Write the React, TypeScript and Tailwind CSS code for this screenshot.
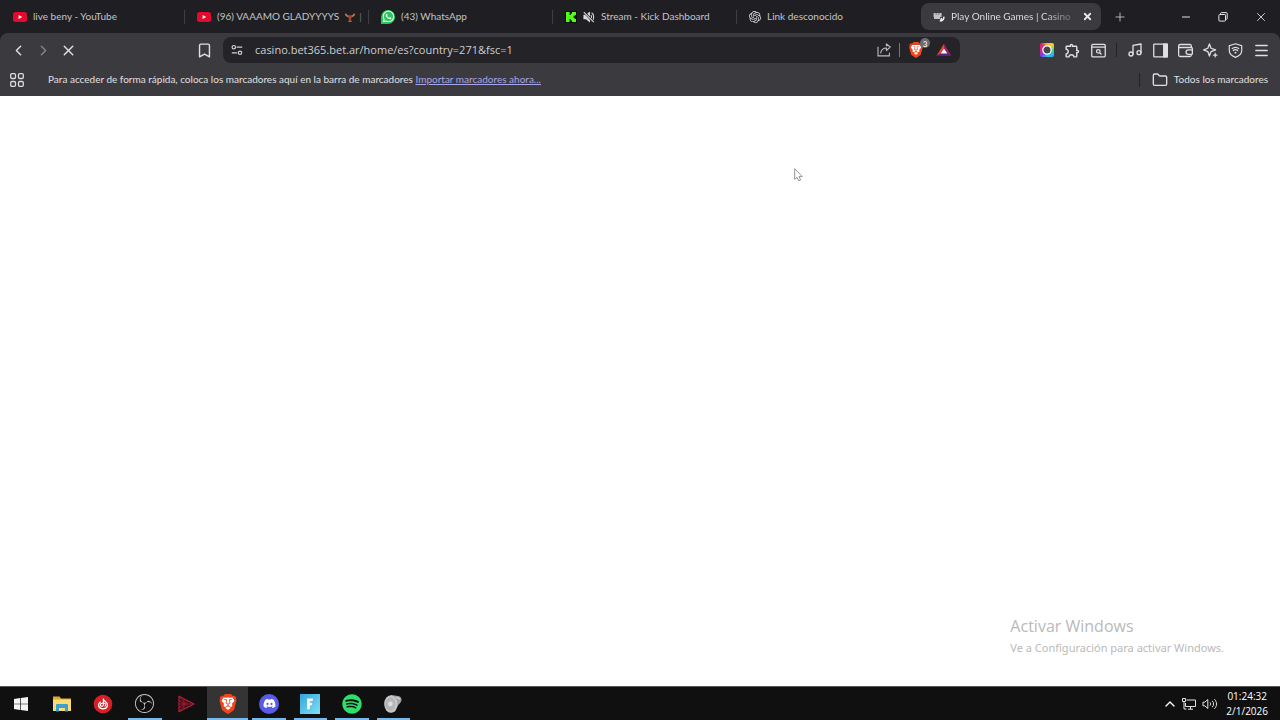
import type { ReactNode } from "react";
import { Bookmark, ChevronLeft, ChevronRight, ChevronUp, Folder, Menu, Minus, Music, Plus, X } from "lucide-react";
import { FaDiscord, FaSpotify, FaWhatsapp } from "react-icons/fa";
import { MdOutlineExtension } from "react-icons/md";
import { SiBrave, SiObsstudio, SiOpenai } from "react-icons/si";

function YoutubeIcon() {
  return (
    <svg viewBox="0 0 14 14" className="size-3.5 shrink-0">
      <rect x="0" y="2" width="14" height="10" rx="2.5" fill="#e5092f" />
      <path d="M5.6 5v4l3.6-2z" fill="#fff" />
    </svg>
  );
}

function WhatsappIcon() {
  return (
    <span className="grid size-3.5 shrink-0 place-items-center rounded-full rounded-bl-sm bg-[#28c65c] text-white">
      <FaWhatsapp size={13} />
    </span>
  );
}

function KickIcon() {
  return (
    <svg viewBox="0 0 12 12" className="size-3 shrink-0">
      <rect width="12" height="12" fill="#06120a" />
      <path
        d="M1 1h3.6v3h1.2V2.500H7V1h4v3H9.700v1.200H8.500v1.600h1.200V8H11v3H7V9.500H5.800V8H4.600v3H1z"
        fill="#53fc18"
      />
    </svg>
  );
}

function MutedIcon() {
  return (
    <svg viewBox="0 0 12 12" className="size-3 shrink-0" fill="none" stroke="#dcdcdf" strokeWidth="1.1">
      <path d="M1 4.4h2L6.4 1.6v8.8L3 7.6H1z" fill="#dcdcdf" />
      <path d="M7.8 4.2c1 .9 1 2.7 0 3.6M8.6 1.8c2.8 1.4 2.8 7 0 8.4" />
      <path d="M1 1l10 10.4" stroke="#1f1e22" strokeWidth="2.4" />
      <path d="M.8 1.2l10 10" />
    </svg>
  );
}

function CasinoIcon() {
  return (
    <svg viewBox="0 0 12 12" className="size-3 shrink-0" fill="none" stroke="#f0f0f0">
      <path d="M.6 3h2.2M3.400 3h2.2M6.200 3h2.4M.6 5h8M1 7h6" strokeWidth="1.7" />
      <path d="M10.800 5.600c.4 2.400-.8 3.700-3.400 4.600M8.600 7l-1.400 3.600" strokeWidth="1.4" />
    </svg>
  );
}

function RamIcon() {
  return (
    <svg viewBox="0 0 10 10" className="size-2.5 shrink-0" fill="none">
      <path d="M.6 1.6C1 4 2.4 4.4 5 4.8 7.6 4.4 9 4 9.4 1.6" stroke="#c98255" strokeWidth="1.6" />
      <path d="M3 3.2h4L5.8 8.4H4.2z" fill="#a3402f" />
      <path d="M3.4 9.2h3.2" stroke="#d6a13a" />
    </svg>
  );
}

function TuneIcon() {
  return (
    <svg viewBox="0 0 12 12" className="size-3" fill="none" stroke="#d2d2d5" strokeWidth="1.2">
      <circle cx="2.8" cy="3.2" r="1.7" />
      <path d="M5.6 3.2h5.6M.8 8.8h5.4" />
      <circle cx="9" cy="8.8" r="1.7" />
    </svg>
  );
}

function ShareIcon() {
  return (
    <svg viewBox="0 0 14 14" className="size-3.5" fill="none" stroke="#bdbdc1" strokeWidth="1.1">
      <path d="M1 3.8v9.1h11.4V9.8" />
      <path d="M3.6 10.4C4.2 6.8 6.4 5 9.4 5V7.6L13.2 4 9.4.8v2.4" strokeLinejoin="round" />
    </svg>
  );
}

function BraveIcon({ className }: { className: string }) {
  return (
    <span className={`relative grid place-items-center text-[#f1431c] ${className}`}>
      <svg viewBox="0 0 24 24" className="absolute inset-0 size-full">
        <path d="M6 4h12l2 4-2 9-6 5-6-5-2-9z" fill="#fff" />
      </svg>
      <SiBrave className="relative size-full" />
    </span>
  );
}

function RewardsIcon() {
  return (
    <svg viewBox="0 0 16 14" className="h-3.5 w-4">
      <path d="M8 .8v5L4.4 10.6.4 13z" fill="#f0442c" />
      <path d="M8 .8v5l3.6 4.8 4 2.4z" fill="#9e1f63" />
      <path d="M.4 13l4.4-2.8h6.4l4.4 2.8z" fill="#5a1f8c" />
      <path d="M8 5.4l3.4 5.2H4.6z" fill="#fff" />
    </svg>
  );
}

function ColorRingIcon() {
  return (
    <span className="grid size-3.5 place-items-center rounded-xs bg-[conic-gradient(#f5b82e,#f5d02e,#3fd37a,#20b9f0,#1fc6e8,#7d3df0,#e0207a,#e0207a,#f5b82e)]">
      <svg viewBox="0 0 10 10" className="size-2.5">
        <circle cx="5" cy="5" r="4.200" fill="#45464c" stroke="#fff" strokeWidth="1.300" />
      </svg>
    </span>
  );
}

function SearchTabIcon() {
  return (
    <svg viewBox="0 0 14 14" className="size-[15px]" fill="none" stroke="currentColor" strokeWidth="1.2">
      <rect x=".7" y="1.2" width="12.6" height="11.8" rx="1" />
      <path d="M.7 3.8h12.6" />
      <circle cx="6.8" cy="7.8" r="1.7" />
      <path d="M8 9l1.8 1.8" />
    </svg>
  );
}

function SidebarIcon() {
  return (
    <svg viewBox="0 0 14 14" className="size-[15px]" fill="none" stroke="currentColor" strokeWidth="1.2">
      <rect x=".7" y="1" width="12.6" height="12" rx=".6" />
      <path d="M10 1h3.300v12H10z" fill="currentColor" />
    </svg>
  );
}

function WalletIcon() {
  return (
    <svg viewBox="0 0 14 14" className="size-[15px]" fill="none" stroke="currentColor" strokeWidth="1.2">
      <path d="M12.4 4.2V2.8c0-.8-.4-1.4-1.4-1.4H2C1.2 1.4.6 2 .6 2.8v8.4c0 .8.6 1.4 1.4 1.4h9c1 0 1.4-.6 1.4-1.4v-.8" />
      <path d="M.8 4.2h11.6c.6 0 1 .4 1 1V10c0 .4-.2.6-.6.6H9.6a2.1 2.1 0 010-4.2h3.8" />
    </svg>
  );
}

function LeoIcon() {
  return (
    <svg viewBox="0 0 14 14" className="size-[15px]" fill="none" stroke="currentColor" strokeWidth="1.2" strokeLinejoin="round">
      <path d="M6 .9l1.5 4L11.8 6.4 7.5 8 6 12.2 4.5 8 .6 6.4l3.900-1.5z" />
      <path d="M11.4 9l.6 1.800 1.600.6-1.600.6-.6 1.600-.6-1.600-1.600-.6 1.600-.6z" fill="currentColor" strokeWidth=".4" />
    </svg>
  );
}

function VpnIcon() {
  return (
    <svg viewBox="0 0 14 14" className="size-[15px]" fill="none" stroke="currentColor" strokeWidth="1.1">
      <path d="M7 .7l5.800 1.900V7c0 3.200-2.600 5.200-5.800 6.400C3.800 12.200 1.200 10.200 1.200 7V2.600z" />
      <path d="M3.600 5.400c2-1.600 4.800-1.600 6.800 0M4.600 7.200c1.500-1.200 3.300-1.200 4.800 0" />
      <circle cx="7" cy="9" r=".9" fill="currentColor" stroke="none" />
    </svg>
  );
}

function GridIcon() {
  return (
    <svg viewBox="0 0 14 14" className="size-3.5" fill="none" stroke="#dcdcdf" strokeWidth="1.300">
      <rect x=".7" y=".7" width="4.800" height="4.800" rx="1.200" />
      <rect x="8.500" y=".7" width="4.800" height="4.800" rx="1.200" />
      <rect x=".7" y="8.500" width="4.800" height="4.800" rx="1.200" />
      <rect x="8.500" y="8.500" width="4.800" height="4.800" rx="1.200" />
    </svg>
  );
}

function RestoreIcon() {
  return (
    <svg viewBox="0 0 10 10" className="size-2.5" fill="none" stroke="currentColor">
      <rect x=".9" y="2.500" width="6.600" height="6.600" rx=".8" />
      <path d="M2.600 2.500V1.400c0-.5.300-.8.800-.8h5c.5 0 .8.300.8.800v5.200c0 .5-.3.800-.8.800h-.9" />
    </svg>
  );
}

function WindowsIcon() {
  return (
    <svg viewBox="0 0 14 14" className="size-3.5" fill="#f4f4f4">
      <path d="M0 2l6-.9v5.600H0zM6.700 1L14 0v6.700H6.700zM0 7.300h6v5.600L0 12zM6.700 7.300H14V14l-7.300-1z" />
    </svg>
  );
}

function ExplorerIcon() {
  return (
    <svg viewBox="0 0 20 16" className="h-4 w-5">
      <path d="M1 .5h6.500l1.500 2h10V15H1z" fill="#e3a92e" />
      <path d="M1 3.500h18V15H1z" fill="#fbdc74" />
      <path d="M4 15.500V9.200C4 8.500 4.500 8 5.200 8h9.600c.7 0 1.200.5 1.200 1.200v6.300h-3V12H7v3.500z" fill="#3d9fd0" />
    </svg>
  );
}

function FlameIcon() {
  return (
    <svg viewBox="0 0 20 20" className="size-5" fill="none" stroke="#fff" strokeWidth="1.200">
      <circle cx="10" cy="10" r="9.300" fill="#d81f26" stroke="none" />
      <path d="M10.400 4.600v6.200c0 2-3 2-3 .1 0-1.200 1.200-1.900 2.800-1.700" />
      <path d="M7.600 7.800C4 10.400 5.400 14.800 10 14.800s6-4.400 2.600-7l-2.200-2" />
      <path d="M10.400 9.200c2.600-.2 3.200 2.200 1.200 3" />
    </svg>
  );
}

function PlayMeshIcon() {
  return (
    <svg viewBox="0 0 18 18" className="size-[18px]" fill="none" stroke="#b51f38" strokeLinejoin="round">
      <path d="M2 1.200L17 9 2 16.800z" fill="#3a0b16" strokeWidth="1.200" />
      <path d="M2 9h14M2 5l5 4-5 4M7 4v10M2 1.200L11 12M2 16.800L11 6" strokeWidth=".7" />
    </svg>
  );
}

function FortniteIcon() {
  return (
    <span className="grid size-5 place-items-center bg-linear-to-br from-[#2fa6dc] to-[#7fe0f5]">
      <svg viewBox="0 0 8 12" className="h-3 w-2">
        <path d="M1.200.5H7L6.600 3H3.800v1.800h2.400l-.2 2.400H3.800V11l-2.600.6z" fill="#fff" />
      </svg>
    </span>
  );
}

function SpeakerIcon() {
  return (
    <svg viewBox="0 0 20 20" className="size-5">
      <path d="M8 1l7 1c2.800.4 4 2.400 3.400 4.800-.5 2-2.400 3-3.200 4.400L12 17.500l-4 1z" fill="#a2a4a7" />
      <ellipse cx="7.800" cy="10" rx="6.600" ry="8.800" fill="#c6c7c9" />
      <ellipse cx="7.400" cy="10" rx="5" ry="6.800" fill="#b3b5b7" />
      <circle cx="7.400" cy="10" r="2.400" fill="#dcddde" />
      <path d="M13 3.500l4 1.400" stroke="#e6e6e6" />
    </svg>
  );
}

function NetworkIcon() {
  return (
    <svg viewBox="0 0 14 12" className="h-3 w-3.5" fill="none" stroke="#e4e4e4">
      <path d="M4.500 2h9v6.500H3.500V5M6 11.200h5M8.500 8.500v2.700" />
      <path d="M.5.500h3v3h-3zM2 3.500V11h2.500" />
    </svg>
  );
}

function VolumeIcon() {
  return (
    <svg viewBox="0 0 16 12" className="h-3 w-4" fill="none" stroke="#e4e4e4">
      <path d="M1 4.200h1.800l3-2.700v9l-3-2.700H1z" />
      <path d="M8 4.400c.8.900.8 2.300 0 3.200M10.200 2.800c1.800 1.800 1.800 4.600 0 6.400M12.400 1.200c2.800 2.700 2.800 6.900 0 9.600" />
    </svg>
  );
}

type Tab = { id: string; title: string; icon: ReactNode; trailing?: ReactNode };

const TABS: Tab[] = [
  { id: "live", title: "live beny - YouTube", icon: <YoutubeIcon /> },
  {
    id: "gladys",
    title: "(96) VAAAMO GLADYYYYS",
    icon: <YoutubeIcon />,
    trailing: (
      <span className="flex items-center gap-1 text-[#77767b]">
        <RamIcon />|
      </span>
    )
  },
  { id: "whatsapp", title: "(43) WhatsApp", icon: <WhatsappIcon /> },
  {
    id: "kick",
    title: "Stream - Kick Dashboard",
    icon: (
      <>
        <KickIcon />
        <MutedIcon />
      </>
    )
  },
  { id: "link", title: "Link desconocido", icon: <SiOpenai size={12} className="shrink-0 text-[#dcdcdf]" /> }
];

const TOOLS = [
  { label: "Música", icon: <Music size={16} strokeWidth={2} /> },
  { label: "Barra lateral", icon: <SidebarIcon /> },
  { label: "Cartera", icon: <WalletIcon /> },
  { label: "Leo", icon: <LeoIcon /> },
  { label: "VPN", icon: <VpnIcon /> },
  { label: "Menú", icon: <Menu size={17} strokeWidth={2} /> }
];

const APPS = [
  { label: "Inicio", icon: <WindowsIcon />, open: false, active: false },
  { label: "Explorador", icon: <ExplorerIcon />, open: false, active: false },
  { label: "BandLab", icon: <FlameIcon />, open: false, active: false },
  { label: "OBS", icon: <SiObsstudio size={19} className="text-[#c9c9c9]" />, open: true, active: false },
  { label: "Reproductor", icon: <PlayMeshIcon />, open: false, active: false },
  { label: "Brave", icon: <BraveIcon className="size-5" />, open: true, active: true },
  {
    label: "Discord",
    icon: (
      <span className="grid size-5 place-items-center rounded-full bg-[#5a5be6] text-white">
        <FaDiscord size={13} />
      </span>
    ),
    open: true,
    active: false
  },
  { label: "Fortnite", icon: <FortniteIcon />, open: true, active: false },
  { label: "Spotify", icon: <FaSpotify size={20} className="text-[#2fdf6b]" />, open: true, active: false },
  { label: "Sonido", icon: <SpeakerIcon />, open: true, active: false }
];

function TabStrip() {
  return (
    <div className="flex h-[33px] items-center pl-px text-[10px] text-[#c4c4c8]">
      <div className="flex h-full min-w-0 flex-1 items-center">
        {TABS.map((tab, i) => (
          <button
            key={tab.id}
            className="flex h-full w-[184px] min-w-0 items-center gap-1.5 overflow-hidden pl-3 whitespace-nowrap"
          >
            {tab.icon}
            <span>{tab.title}</span>
            {tab.trailing}
            {i < TABS.length - 1 && <span className="ml-auto h-3.5 w-px bg-[#3f3e43]" />}
          </button>
        ))}
        <div className="flex h-[27px] w-[180px] items-center gap-1.5 rounded-lg bg-[#3b3a3e] px-3 text-[#e6e6e8]">
          <CasinoIcon />
          <button className="min-w-0 flex-1 bg-linear-to-r from-[#e6e6e8] from-75% to-[#5b5a5f] bg-clip-text text-left whitespace-nowrap text-transparent">
            Play Online Games | Casino
          </button>
          <button aria-label="Cerrar pestaña" className="-mr-1">
            <X size={11} strokeWidth={4} />
          </button>
        </div>
        <button aria-label="Nueva pestaña" className="ml-3">
          <Plus size={14} strokeWidth={1.5} />
        </button>
      </div>
      <div className="flex items-center gap-[26px] pr-3 text-[#e6e6e8]">
        <button aria-label="Minimizar"><Minus size={12} strokeWidth={2} /></button>
        <button aria-label="Restaurar"><RestoreIcon /></button>
        <button aria-label="Cerrar"><X size={14} strokeWidth={1.5} /></button>
      </div>
    </div>
  );
}

function Toolbar() {
  return (
    <div className="flex h-[34px] items-center px-2.5 text-[#e0e0e3]">
      <div className="flex w-[213px] items-center gap-2">
        <button aria-label="Atrás"><ChevronLeft size={17} /></button>
        <button aria-label="Adelante" className="text-[#85848a]"><ChevronRight size={17} /></button>
        <button aria-label="Detener"><X size={17} strokeWidth={2} /></button>
        <button aria-label="Guardar" className="mr-2.5 ml-auto"><Bookmark size={17} strokeWidth={2} /></button>
      </div>
      <div className="flex h-[26px] min-w-0 flex-1 items-center gap-3 rounded-lg bg-[#242327] px-2">
        <TuneIcon />
        <input
          aria-label="Dirección"
          defaultValue="casino.bet365.bet.ar/home/es?country=271&fsc=1"
          className="min-w-0 flex-1 bg-transparent font-['Open_Sans',sans-serif] text-[11px] text-[#cfcfd3] outline-none"
        />
        <div className="flex items-center gap-2">
          <button aria-label="Compartir"><ShareIcon /></button>
          <span className="h-3.5 w-px bg-[#77767b]" />
          <button aria-label="Escudos" className="relative mr-1">
            <BraveIcon className="size-4" />
            <span className="absolute -top-1 -right-1.5 grid size-2.5 place-items-center rounded-full bg-[#6b6a70] text-[8px] text-white">
              3
            </span>
          </button>
          <button aria-label="Recompensas"><RewardsIcon /></button>
        </div>
      </div>
      <div className="ml-20 flex items-center gap-2.5">
        <button aria-label="Color"><ColorRingIcon /></button>
        <button aria-label="Extensiones"><MdOutlineExtension size={17} /></button>
        <button aria-label="Buscar pestañas"><SearchTabIcon /></button>
        <span className="h-3.5 w-px bg-[#232226]" />
        {TOOLS.map((t) => (
          <button key={t.label} aria-label={t.label}>
            {t.icon}
          </button>
        ))}
      </div>
    </div>
  );
}

function BookmarksBar() {
  return (
    <div className="flex h-[29px] items-center px-2.5 pr-3 pb-1 text-[10px] whitespace-nowrap text-[#e0e0e3]">
      <button aria-label="Grupos"><GridIcon /></button>
      <p className="ml-6">
        Para acceder de forma rápida, coloca los marcadores aquí en la barra de marcadores{" "}
        <a href="#importar" className="text-[#a9a6e8] underline">Importar marcadores ahora...</a>
      </p>
      <span className="mr-3 ml-auto h-3.5 w-px bg-[#232226]" />
      <button className="flex items-center gap-1.5">
        <Folder size={16} strokeWidth={2} />
        Todos los marcadores
      </button>
    </div>
  );
}

function Taskbar() {
  return (
    <footer className="flex h-[34px] items-stretch justify-between border-t border-[#55565a] bg-[#101010] text-white">
      <nav className="grid w-[414px] grid-cols-10">
        {APPS.map((app) => (
          <button
            key={app.label}
            aria-label={app.label}
            className={`relative grid place-items-center ${app.active ? "bg-[#343434]" : ""}`}
          >
            {app.icon}
            {app.open && (
              <span
                className={`absolute bottom-0 h-0.5 bg-[#76b9ed] ${app.active ? "inset-x-0" : "inset-x-1"}`}
              />
            )}
          </button>
        ))}
      </nav>
      <div className="flex items-center pr-3">
        <button aria-label="Iconos ocultos" className="mr-1"><ChevronUp size={16} strokeWidth={2} /></button>
        <button aria-label="Red" className="mr-1.5"><NetworkIcon /></button>
        <button aria-label="Volumen" className="mr-2"><VolumeIcon /></button>
        <div className="text-center font-['Open_Sans',sans-serif] text-[10px] leading-[15px]">
          <div>01:24:32</div>
          <div>2/1/2026</div>
        </div>
      </div>
    </footer>
  );
}

export default function App() {
  return (
    <div className="flex h-screen flex-col bg-[#1f1e22] font-['Lato','Open_Sans',sans-serif]">
      <header>
        <TabStrip />
        <div className="rounded-t-lg bg-[#3b3a3e]">
          <Toolbar />
          <BookmarksBar />
        </div>
      </header>
      <main className="relative flex-1 bg-white">
        <svg viewBox="0 0 10 14" className="absolute top-[72px] left-[62%] h-3.5 w-2.5">
          <path
            d="M.7.700v10.600l2.300-2 1.800 3.600 1.800-.9L5 8.600h3.300z"
            fill="#fff"
            stroke="#8a8a8a"
            strokeWidth=".9"
          />
        </svg>
        <div className="absolute right-14 bottom-7 text-[#b9b9b9]">
          <p className="font-['Open_Sans',sans-serif] text-base">Activar Windows</p>
          <p className="font-['Noto_Sans',sans-serif] text-[11px] leading-5">
            Ve a Configuración para activar Windows.
          </p>
        </div>
      </main>
      <Taskbar />
    </div>
  );
}
